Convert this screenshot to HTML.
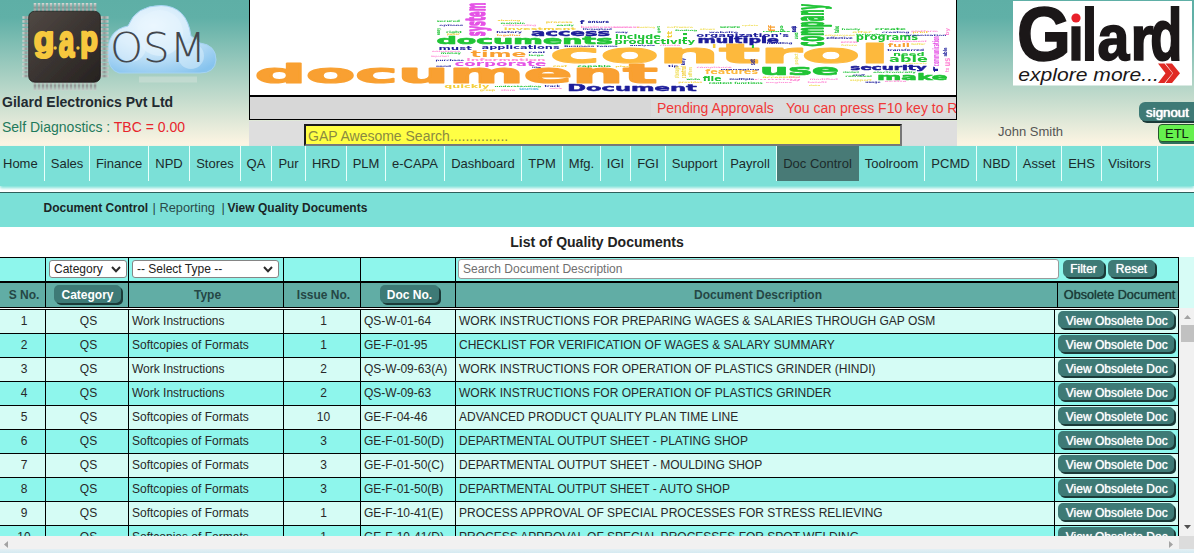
<!DOCTYPE html>
<html lang="en">
<head>
<meta charset="utf-8">
<title>GAP OSM - View Quality Documents</title>
<style>
*{box-sizing:border-box}
html,body{margin:0;padding:0}
body{width:1194px;height:553px;overflow:hidden;position:relative;background:#fff;font-family:"Liberation Sans",Arial,sans-serif;font-size:13px;color:#222}
.abs{position:absolute}
#hdr{left:0;top:0;width:1194px;height:146px;background:linear-gradient(to bottom,#5eafa6 0px,#60b0a7 18px,#fbf4e2 143px,#fcf4e3 146px)}
#banner{left:249px;top:-1px;width:708px;height:97px;border:1px solid #000;background:#fff;overflow:hidden}
#marq{left:249px;top:96px;width:708px;height:24px;border:1px solid #000;background:#d7d7d7;overflow:hidden;color:#f03838;font-size:14px;white-space:nowrap}
#marq span{position:absolute;top:2px;height:18px;line-height:18px;background:#dcdcdc;padding:0 6px}
#srchbg{left:249px;top:121px;width:708px;height:25px;background:#dedede}
#srch{left:304px;top:124px;width:598px;height:22px;background:#ffff44;border:2px solid;border-color:#1c1c1c #777 #777 #1c1c1c;color:#8a8a40;font-size:14px;line-height:20px;padding-left:2px;overflow:hidden;white-space:nowrap}
#co{left:2px;top:94px;font-weight:bold;font-size:14px;color:#222a30;white-space:nowrap;line-height:16px}
#sd{left:2px;top:119px;font-size:14px;color:#1f7a5c;white-space:nowrap;line-height:16px}
#sd b{font-weight:normal;color:#e8242c}
#user{left:998px;top:123.5px;font-size:13px;color:#555;white-space:nowrap;line-height:15px}
.btn{background:#3e7a76;color:#fff;font-weight:bold;border-radius:5px;box-shadow:2px 2px 0 #1b3a38;text-align:center;white-space:nowrap;text-shadow:0 0 1px #cfe}
#signout{left:1139px;top:102px;width:60px;height:19px;font-size:13.33px;font-weight:normal;text-shadow:0 0 1px #fff,0 0 1px #fff;line-height:21px;overflow:hidden;border-radius:6px;text-align:left;padding-left:7px}
#etl{left:1158px;top:124px;width:40px;height:18px;background:#66f04e;border:1px solid #26562e;border-radius:4px;box-shadow:1px 2px 0 #2f6f5c;font-size:13px;line-height:17px;color:#10200f;padding-left:6px}
#nav{left:0;top:146px;width:1194px;height:40px;background:#7be0d7;box-shadow:0 2px 3px #7be0d7}
#nav div{position:absolute;top:0;height:35px;border-right:1px solid #e8fffb;font-size:13px;line-height:35px;text-align:center;color:#1c2b2b;white-space:nowrap}
#nav div.on{background:#487a76;border-right-color:#487a76}
#sub{left:0;top:192px;width:1194px;height:35px;background:#7be0d7;border-top:1px solid #2f5f5b}
#sub span{position:absolute;top:7px;font-size:12.8px;line-height:15px;white-space:nowrap;color:#2a4a48}
#sub b{font-size:12px}
#sub b{color:#1a2626}
#ttl{left:397px;top:234px;width:400px;text-align:center;font-weight:bold;font-size:14px;line-height:17px;color:#222}

#side{left:1179px;top:257px;width:15px;height:51px;background:#d7fcf6}
#th{left:0;top:257px;width:1179px;height:51px;background:#000;overflow:hidden}
#th .c{position:absolute;overflow:hidden;white-space:nowrap}
#th .f{top:1px;height:23px;background:#8ef6ec}
#th .h{top:26px;height:24px;background:#61ada5;color:#254745;font-weight:bold;font-size:12px;line-height:24px;text-align:center}
.c1{left:0;width:45px}.c2{left:46px;width:82px}.c3{left:129px;width:154px}.c4{left:284px;width:76px}.c5{left:361px;width:94px}
#th .c6{left:456px;width:601px}#th .c7{left:1058px;width:120px}
#tb .c6{left:456px;width:598px}#tb .c7{left:1055px;width:123px}
.sel{position:absolute;top:2px;height:18px;background:#fff;border:1px solid #858585;border-radius:3px;font-size:12px;line-height:16px;color:#222;padding-left:4px;white-space:nowrap}
.sel svg{position:absolute;right:5px;top:5px}
#dsc{position:absolute;left:2px;top:1px;width:601px;height:20px;background:#fff;border:1px solid #9a9a9a;border-radius:3px;font-size:12px;line-height:18px;color:#6f6f6f;padding-left:4px}
.hb{position:absolute;top:2px;height:18px;line-height:20.5px;font-size:12px;font-weight:bold;text-shadow:none}
.fb{position:absolute;top:2px;height:17px;line-height:18px;overflow:hidden;font-size:12px;font-weight:normal;text-shadow:0 0 1px #fff}
#tb{left:0;top:309px;width:1179px;height:227px;background:#000;overflow:hidden}
#tb .r{position:absolute;left:0;width:1179px;height:23px}
#tb .c{position:absolute;top:0;height:23px;font-size:12px;line-height:23px;color:#282828;white-space:nowrap;overflow:hidden}
#tb .o .c{background:#d5fcf5}#tb .e .c{background:#8ef6ec}
#tb .c1,#tb .c2,#tb .c4{text-align:center;padding-left:3px}
#th .h{padding-left:3px}
#tb .c3,#tb .c5,#tb .c6{padding-left:3px}
.vb{position:absolute;left:3px;top:1px;width:115.5px;height:17px;line-height:21.5px;overflow:hidden;padding-left:2px;font-size:12px;font-weight:normal;text-shadow:0 0 1px #fff}
#vs{left:1179px;top:308px;width:15px;height:228px;background:#f1f1f1}
#vs i{position:absolute;left:2px;top:17px;width:13px;height:17px;background:#c1c1c1}
#hs{left:0;top:536px;width:1179px;height:13px;background:#f1f1f1}
#cor{left:1179px;top:536px;width:15px;height:13px;background:#dcdcdc}
#foot{left:0;top:549px;width:1194px;height:4px;background:linear-gradient(to bottom,#e4f0f4,#d5eaf1)}
</style>
</head>
<body>
<div class="abs" id="hdr"></div>

<!--GAP--><svg class="abs" style="left:0;top:0" width="249" height="95" viewBox="0 0 249 95">
<defs>
<linearGradient id="pg" x1="0" y1="0" x2="0" y2="1"><stop offset="0" stop-color="#d8dcd8"/><stop offset=".5" stop-color="#8f9694"/><stop offset="1" stop-color="#c9cfcc"/></linearGradient>
<linearGradient id="ph" x1="0" y1="0" x2="1" y2="0"><stop offset="0" stop-color="#d8dcd8"/><stop offset=".5" stop-color="#8f9694"/><stop offset="1" stop-color="#c9cfcc"/></linearGradient>
<linearGradient id="chip" x1="0" y1="0" x2="1" y2="1"><stop offset="0" stop-color="#514944"/><stop offset=".5" stop-color="#3a3431"/><stop offset="1" stop-color="#262220"/></linearGradient>
<radialGradient id="cl" cx=".42" cy=".3" r=".8"><stop offset="0" stop-color="#f1f9ff"/><stop offset=".45" stop-color="#d2eafa"/><stop offset="1" stop-color="#86c3ee"/></radialGradient>
<filter id="bl" x="-10%" y="-10%" width="120%" height="120%"><feGaussianBlur stdDeviation="0.6"/></filter>
</defs>
<g filter="url(#bl)">
<path d="M119 73 Q108 70 108 54 Q107 30 128 26 Q136 5.5 161 5.5 Q187 6 191 36 Q198 40 200 43 Q216 45 216 60 Q215 73 200 73 Z" fill="url(#cl)" stroke="#a5d3f2" stroke-width="1"/>
<circle cx="160" cy="33" r="23" fill="#e6f4fd" opacity=".55"/>
<circle cx="131" cy="47" r="15" fill="#e6f4fd" opacity=".5"/>
<circle cx="191" cy="56" r="13" fill="#dcf0fc" opacity=".5"/>
<rect x="139" y="76.5" width="58" height="6" fill="#dfe6e2" opacity=".4"/>
</g>
<text transform="translate(109.94 61.57) scale(0.4205 0.4172)" font-family="'DejaVu Sans Light','DejaVu Sans',sans-serif" font-weight="200" font-size="100" fill="#43474d">OSM</text>
<g filter="url(#bl)"><rect x="33.7" y="3" width="2.6" height="9" fill="url(#pg)"/><rect x="33.7" y="81" width="2.6" height="9.5" fill="url(#pg)"/><rect x="37.7" y="3" width="2.6" height="9" fill="url(#pg)"/><rect x="37.7" y="81" width="2.6" height="9.5" fill="url(#pg)"/><rect x="41.7" y="3" width="2.6" height="9" fill="url(#pg)"/><rect x="41.7" y="81" width="2.6" height="9.5" fill="url(#pg)"/><rect x="45.7" y="3" width="2.6" height="9" fill="url(#pg)"/><rect x="45.7" y="81" width="2.6" height="9.5" fill="url(#pg)"/><rect x="49.7" y="3" width="2.6" height="9" fill="url(#pg)"/><rect x="49.7" y="81" width="2.6" height="9.5" fill="url(#pg)"/><rect x="53.7" y="3" width="2.6" height="9" fill="url(#pg)"/><rect x="53.7" y="81" width="2.6" height="9.5" fill="url(#pg)"/><rect x="57.7" y="3" width="2.6" height="9" fill="url(#pg)"/><rect x="57.7" y="81" width="2.6" height="9.5" fill="url(#pg)"/><rect x="61.7" y="3" width="2.6" height="9" fill="url(#pg)"/><rect x="61.7" y="81" width="2.6" height="9.5" fill="url(#pg)"/><rect x="65.7" y="3" width="2.6" height="9" fill="url(#pg)"/><rect x="65.7" y="81" width="2.6" height="9.5" fill="url(#pg)"/><rect x="69.7" y="3" width="2.6" height="9" fill="url(#pg)"/><rect x="69.7" y="81" width="2.6" height="9.5" fill="url(#pg)"/><rect x="73.7" y="3" width="2.6" height="9" fill="url(#pg)"/><rect x="73.7" y="81" width="2.6" height="9.5" fill="url(#pg)"/><rect x="77.7" y="3" width="2.6" height="9" fill="url(#pg)"/><rect x="77.7" y="81" width="2.6" height="9.5" fill="url(#pg)"/><rect x="81.7" y="3" width="2.6" height="9" fill="url(#pg)"/><rect x="81.7" y="81" width="2.6" height="9.5" fill="url(#pg)"/><rect x="85.7" y="3" width="2.6" height="9" fill="url(#pg)"/><rect x="85.7" y="81" width="2.6" height="9.5" fill="url(#pg)"/><rect x="89.7" y="3" width="2.6" height="9" fill="url(#pg)"/><rect x="89.7" y="81" width="2.6" height="9.5" fill="url(#pg)"/><rect x="93.7" y="3" width="2.6" height="9" fill="url(#pg)"/><rect x="93.7" y="81" width="2.6" height="9.5" fill="url(#pg)"/><rect x="22.5" y="16.2" width="7" height="2.6" fill="url(#ph)"/><rect x="100" y="16.2" width="8.5" height="2.6" fill="url(#ph)"/><rect x="22.5" y="20.1" width="7" height="2.6" fill="url(#ph)"/><rect x="100" y="20.1" width="8.5" height="2.6" fill="url(#ph)"/><rect x="22.5" y="24.0" width="7" height="2.6" fill="url(#ph)"/><rect x="100" y="24.0" width="8.5" height="2.6" fill="url(#ph)"/><rect x="22.5" y="27.9" width="7" height="2.6" fill="url(#ph)"/><rect x="100" y="27.9" width="8.5" height="2.6" fill="url(#ph)"/><rect x="22.5" y="31.8" width="7" height="2.6" fill="url(#ph)"/><rect x="100" y="31.8" width="8.5" height="2.6" fill="url(#ph)"/><rect x="22.5" y="35.7" width="7" height="2.6" fill="url(#ph)"/><rect x="100" y="35.7" width="8.5" height="2.6" fill="url(#ph)"/><rect x="22.5" y="39.6" width="7" height="2.6" fill="url(#ph)"/><rect x="100" y="39.6" width="8.5" height="2.6" fill="url(#ph)"/><rect x="22.5" y="43.5" width="7" height="2.6" fill="url(#ph)"/><rect x="100" y="43.5" width="8.5" height="2.6" fill="url(#ph)"/><rect x="22.5" y="47.4" width="7" height="2.6" fill="url(#ph)"/><rect x="100" y="47.4" width="8.5" height="2.6" fill="url(#ph)"/><rect x="22.5" y="51.3" width="7" height="2.6" fill="url(#ph)"/><rect x="100" y="51.3" width="8.5" height="2.6" fill="url(#ph)"/><rect x="22.5" y="55.2" width="7" height="2.6" fill="url(#ph)"/><rect x="100" y="55.2" width="8.5" height="2.6" fill="url(#ph)"/><rect x="22.5" y="59.1" width="7" height="2.6" fill="url(#ph)"/><rect x="100" y="59.1" width="8.5" height="2.6" fill="url(#ph)"/><rect x="22.5" y="63.0" width="7" height="2.6" fill="url(#ph)"/><rect x="100" y="63.0" width="8.5" height="2.6" fill="url(#ph)"/><rect x="22.5" y="66.9" width="7" height="2.6" fill="url(#ph)"/><rect x="100" y="66.9" width="8.5" height="2.6" fill="url(#ph)"/><rect x="22.5" y="70.8" width="7" height="2.6" fill="url(#ph)"/><rect x="100" y="70.8" width="8.5" height="2.6" fill="url(#ph)"/><rect x="22.5" y="74.7" width="7" height="2.6" fill="url(#ph)"/><rect x="100" y="74.7" width="8.5" height="2.6" fill="url(#ph)"/>
<rect x="28.7" y="11.2" width="71.7" height="71" rx="6" fill="url(#chip)" stroke="#1d1a19" stroke-width=".8"/>
</g>
<text transform="translate(33.65 50.95) scale(0.3366 0.3507)" font-family="'Liberation Sans',Arial,sans-serif" font-weight="bold" font-size="100" fill="#f6c83e" stroke="#f6c83e" stroke-width="2.2" vector-effect="non-scaling-stroke" stroke-linejoin="round">g</text>
<text transform="translate(58.83 57.04) scale(0.2804 0.4639)" font-family="'Liberation Sans',Arial,sans-serif" font-weight="bold" font-size="100" fill="#f6c83e" stroke="#f6c83e" stroke-width="2.2" vector-effect="non-scaling-stroke" stroke-linejoin="round">a</text>
<text transform="translate(80.23 51.10) scale(0.2871 0.3518)" font-family="'Liberation Sans',Arial,sans-serif" font-weight="bold" font-size="100" fill="#f6c83e" stroke="#f6c83e" stroke-width="2.2" vector-effect="non-scaling-stroke" stroke-linejoin="round">p</text>
<circle cx="55.2" cy="48" r="1.7" fill="#f6c83e"/>
<circle cx="78" cy="48" r="1.7" fill="#f6c83e"/>
</svg><!--/GAP-->

<div class="abs" id="co">Gilard Electronics Pvt Ltd</div>
<div class="abs" id="sd">Self Diagnostics : <b>TBC = 0.00</b></div>

<div class="abs" id="banner">
<!--CLOUD--><svg class="abs" style="left:0;top:0" width="706" height="96" viewBox="0 0 706 96">
<defs><filter id="cb" x="-2%" y="-5%" width="104%" height="110%"><feGaussianBlur stdDeviation="0.45"/></filter></defs>
<g filter="url(#cb)">
<text transform="translate(4.65 82.71) scale(0.7176 0.2594)" font-family="'DejaVu Sans',sans-serif" font-weight="bold" font-size="100" fill="#f9a030" stroke="#f9a030" stroke-width="2.4" vector-effect="non-scaling-stroke" stroke-linejoin="round">document</text>
<text transform="translate(299.99 63.20) scale(0.8502 0.2684)" font-family="'DejaVu Sans',sans-serif" font-weight="bold" font-size="100" fill="#fdb93e" stroke="#fdb93e" stroke-width="2.4" vector-effect="non-scaling-stroke" stroke-linejoin="round">control</text>
<text transform="translate(186.39 44.34) scale(0.2842 0.1071)" font-family="'DejaVu Sans',sans-serif" font-weight="bold" font-size="100" fill="#20c436" stroke="#20c436" stroke-width="1.2" vector-effect="non-scaling-stroke" stroke-linejoin="round">documents</text>
<text transform="translate(509.91 74.90) scale(0.3984 0.1322)" font-family="'DejaVu Sans',sans-serif" font-weight="bold" font-size="100" fill="#20c436" stroke="#20c436" stroke-width="1.4" vector-effect="non-scaling-stroke" stroke-linejoin="round">use</text>
<text transform="translate(572.71 46.56) rotate(-90) scale(0.0837 0.3858)" font-family="'DejaVu Sans',sans-serif" font-weight="bold" font-size="100" fill="#20c436" stroke="#20c436" stroke-width="1.4" vector-effect="non-scaling-stroke" stroke-linejoin="round">company</text>
<text transform="translate(234.58 36.32) rotate(-90) scale(0.0836 0.2616)" font-family="'DejaVu Sans',sans-serif" font-weight="bold" font-size="100" fill="#e552e6" stroke="#e552e6" stroke-width="1.2" vector-effect="non-scaling-stroke" stroke-linejoin="round">system</text>
<text transform="translate(281.10 36.37) scale(0.2122 0.0835)" font-family="'DejaVu Sans',sans-serif" font-weight="bold" font-size="100" fill="#1c1c9a" stroke="#1c1c9a" stroke-width="0.8" vector-effect="non-scaling-stroke" stroke-linejoin="round">access</text>
<text transform="translate(220.52 56.86) scale(0.2206 0.0903)" font-family="'DejaVu Sans',sans-serif" font-weight="bold" font-size="100" fill="#f9a030">time</text>
<text transform="translate(204.49 66.31) scale(0.1669 0.0670)" font-family="'DejaVu Sans',sans-serif" font-weight="bold" font-size="100" fill="#e552e6">corporate</text>
<text transform="translate(216.22 61.14) scale(0.1195 0.0413)" font-family="'DejaVu Sans',sans-serif" font-weight="bold" font-size="100" fill="#ff8cd6">Information</text>
<text transform="translate(231.52 49.33) scale(0.1139 0.0517)" font-family="'DejaVu Sans',sans-serif" font-weight="bold" font-size="100" fill="#1c1c9a">applications</text>
<text transform="translate(188.53 50.21) scale(0.1182 0.0571)" font-family="'DejaVu Sans',sans-serif" font-weight="bold" font-size="100" fill="#1c1c9a">must</text>
<text transform="translate(194.33 88.03) scale(0.1115 0.0544)" font-family="'DejaVu Sans',sans-serif" font-weight="bold" font-size="100" fill="#f4cf3a">quickly</text>
<text transform="translate(317.27 91.28) scale(0.2261 0.0819)" font-family="'DejaVu Sans',sans-serif" font-weight="bold" font-size="100" fill="#1c1c9a" stroke="#1c1c9a" stroke-width="0.8" vector-effect="non-scaling-stroke" stroke-linejoin="round">Document</text>
<text transform="translate(447.46 42.97) scale(0.1749 0.0786)" font-family="'DejaVu Sans',sans-serif" font-weight="bold" font-size="100" fill="#1c1c9a" stroke="#1c1c9a" stroke-width="0.8" vector-effect="non-scaling-stroke" stroke-linejoin="round">multiple</text>
<text transform="translate(364.23 44.25) scale(0.1180 0.0626)" font-family="'DejaVu Sans',sans-serif" font-weight="bold" font-size="100" fill="#20c436">productivity</text>
<text transform="translate(365.08 39.31) scale(0.1117 0.0606)" font-family="'DejaVu Sans',sans-serif" font-weight="bold" font-size="100" fill="#20c436">include</text>
<text transform="translate(446.31 36.50) scale(0.1162 0.0513)" font-family="'DejaVu Sans',sans-serif" font-weight="bold" font-size="100" fill="#1c1c9a">organization's</text>
<text transform="translate(605.85 40.37) scale(0.1149 0.0852)" font-family="'DejaVu Sans',sans-serif" font-weight="bold" font-size="100" fill="#20c436">programs</text>
<text transform="translate(600.36 70.26) scale(0.1684 0.0718)" font-family="'DejaVu Sans',sans-serif" font-weight="bold" font-size="100" fill="#1c1c9a" stroke="#1c1c9a" stroke-width="0.8" vector-effect="non-scaling-stroke" stroke-linejoin="round">security</text>
<text transform="translate(627.08 80.07) scale(0.2326 0.0877)" font-family="'DejaVu Sans',sans-serif" font-weight="bold" font-size="100" fill="#20c436" stroke="#20c436" stroke-width="1" vector-effect="non-scaling-stroke" stroke-linejoin="round">make</text>
<text transform="translate(639.12 62.08) scale(0.1603 0.0826)" font-family="'DejaVu Sans',sans-serif" font-weight="bold" font-size="100" fill="#20c436">able</text>
<text transform="translate(643.06 55.52) scale(0.1135 0.0516)" font-family="'DejaVu Sans',sans-serif" font-weight="bold" font-size="100" fill="#20c436">need</text>
<text transform="translate(637.79 47.12) scale(0.1212 0.0542)" font-family="'DejaVu Sans',sans-serif" font-weight="bold" font-size="100" fill="#f9a030">full</text>
<text transform="translate(455.31 74.20) scale(0.1113 0.0684)" font-family="'DejaVu Sans',sans-serif" font-weight="bold" font-size="100" fill="#fdb93e">features</text>
<text transform="translate(452.69 81.21) scale(0.1068 0.0632)" font-family="'DejaVu Sans',sans-serif" font-weight="bold" font-size="100" fill="#20c436">file</text>
<text transform="translate(689.17 66.15) rotate(-90) scale(0.0347 0.0890)" font-family="'DejaVu Sans',sans-serif" font-weight="bold" font-size="100" fill="#e552e6">communication</text>
<text transform="translate(186.74 22.16) scale(0.0519 0.0284)" font-family="'DejaVu Sans',sans-serif" font-weight="bold" font-size="100" fill="#20c436">secured</text>
<text transform="translate(189.26 25.73) scale(0.0569 0.0227)" font-family="'DejaVu Sans',sans-serif" font-weight="bold" font-size="100" fill="#1c1c9a">options</text>
<text transform="translate(196.02 32.58) scale(0.0588 0.0287)" font-family="'DejaVu Sans',sans-serif" font-weight="bold" font-size="100" fill="#20c436">right</text>
<text transform="translate(196.66 35.43) scale(0.0407 0.0274)" font-family="'DejaVu Sans',sans-serif" font-weight="bold" font-size="100" fill="#f4cf3a">paper</text>
<text transform="translate(189.89 35.12) rotate(-90) scale(0.0276 0.0516)" font-family="'DejaVu Sans',sans-serif" font-weight="bold" font-size="100" fill="#20c436">easy</text>
<text transform="translate(247.43 21.48) scale(0.0542 0.0195)" font-family="'DejaVu Sans',sans-serif" font-weight="bold" font-size="100" fill="#f4cf3a">sharing</text>
<text transform="translate(250.60 23.57) scale(0.0490 0.0219)" font-family="'DejaVu Sans',sans-serif" font-weight="bold" font-size="100" fill="#20c436">maintain</text>
<text transform="translate(252.81 26.01) scale(0.0450 0.0226)" font-family="'DejaVu Sans',sans-serif" font-weight="bold" font-size="100" fill="#ff8cd6">collaborating</text>
<text transform="translate(253.76 29.95) scale(0.1135 0.0361)" font-family="'DejaVu Sans',sans-serif" font-weight="bold" font-size="100" fill="#f4cf3a">investment</text>
<text transform="translate(246.26 32.93) scale(0.0653 0.0267)" font-family="'DejaVu Sans',sans-serif" font-weight="bold" font-size="100" fill="#1c1c9a">history</text>
<text transform="translate(246.74 36.49) scale(0.0493 0.0236)" font-family="'DejaVu Sans',sans-serif" font-weight="bold" font-size="100" fill="#f9a030">together</text>
<text transform="translate(295.79 23.31) scale(0.0617 0.0287)" font-family="'DejaVu Sans',sans-serif" font-weight="bold" font-size="100" fill="#f4cf3a">process</text>
<text transform="translate(306.47 26.01) scale(0.0536 0.0226)" font-family="'DejaVu Sans',sans-serif" font-weight="bold" font-size="100" fill="#20c436">easily</text>
<text transform="translate(329.82 23.80) scale(0.1053 0.0579)" font-family="'DejaVu Sans',sans-serif" font-weight="bold" font-size="100" fill="#1c1c9a">f</text>
<text transform="translate(337.77 23.14) scale(0.0551 0.0383)" font-family="'DejaVu Sans',sans-serif" font-weight="bold" font-size="100" fill="#1c1c9a">ensure</text>
<text transform="translate(330.49 27.86) scale(0.0619 0.0284)" font-family="'DejaVu Sans',sans-serif" font-weight="bold" font-size="100" fill="#ff8cd6">business success</text>
<text transform="translate(332.74 30.47) scale(0.0464 0.0246)" font-family="'DejaVu Sans',sans-serif" font-weight="bold" font-size="100" fill="#1c1c9a">throughout</text>
<text transform="translate(365.35 33.10) scale(0.0545 0.0232)" font-family="'DejaVu Sans',sans-serif" font-weight="bold" font-size="100" fill="#1c1c9a">may</text>
<text transform="translate(313.95 47.27) scale(0.0611 0.0232)" font-family="'DejaVu Sans',sans-serif" font-weight="bold" font-size="100" fill="#1c1c9a">Business teams</text>
<text transform="translate(181.72 52.17) scale(0.0554 0.0206)" font-family="'DejaVu Sans',sans-serif" font-weight="bold" font-size="100" fill="#ff8cd6">solutions</text>
<text transform="translate(190.86 54.05) scale(0.0536 0.0258)" font-family="'DejaVu Sans',sans-serif" font-weight="bold" font-size="100" fill="#20c436">money</text>
<text transform="translate(180.73 57.23) scale(0.0326 0.0227)" font-family="'DejaVu Sans',sans-serif" font-weight="bold" font-size="100" fill="#ff8cd6">important</text>
<text transform="translate(185.54 60.73) scale(0.0553 0.0227)" font-family="'DejaVu Sans',sans-serif" font-weight="bold" font-size="100" fill="#1c1c9a">purchase</text>
<text transform="translate(185.71 66.86) scale(0.0576 0.0245)" font-family="'DejaVu Sans',sans-serif" font-weight="bold" font-size="100" fill="#1c1c9a">send</text>
<text transform="translate(278.36 52.97) scale(0.0771 0.0232)" font-family="'DejaVu Sans',sans-serif" font-weight="bold" font-size="100" fill="#1c1c9a">real</text>
<text transform="translate(278.56 56.01) scale(0.0530 0.0226)" font-family="'DejaVu Sans',sans-serif" font-weight="bold" font-size="100" fill="#20c436">large</text>
<text transform="translate(244.56 86.56) scale(0.0568 0.0205)" font-family="'DejaVu Sans',sans-serif" font-weight="bold" font-size="100" fill="#20c436">understanding</text>
<text transform="translate(294.53 86.86) scale(0.0536 0.0284)" font-family="'DejaVu Sans',sans-serif" font-weight="bold" font-size="100" fill="#1c1c9a">track</text>
<text transform="translate(250.75 91.06) scale(0.0494 0.0237)" font-family="'DejaVu Sans',sans-serif" font-weight="bold" font-size="100" fill="#ff8cd6">store</text>
<text transform="translate(269.18 89.84) scale(0.0449 0.0383)" font-family="'DejaVu Sans',sans-serif" font-weight="bold" font-size="100" fill="#58b8e8">sources</text>
<text transform="translate(229.80 90.52) scale(0.0463 0.0271)" font-family="'DejaVu Sans',sans-serif" font-weight="bold" font-size="100" fill="#f4cf3a">group</text>
<text transform="translate(299.53 89.17) scale(0.0332 0.0194)" font-family="'DejaVu Sans',sans-serif" font-weight="bold" font-size="100" fill="#ff8cd6">mobile</text>
<text transform="translate(302.74 66.86) scale(0.0611 0.0265)" font-family="'DejaVu Sans',sans-serif" font-weight="bold" font-size="100" fill="#f4cf3a">cost</text>
<text transform="translate(327.27 66.96) scale(0.0767 0.0258)" font-family="'DejaVu Sans',sans-serif" font-weight="bold" font-size="100" fill="#20c436">capable</text>
<text transform="translate(365.29 66.91) scale(0.0621 0.0186)" font-family="'DejaVu Sans',sans-serif" font-weight="bold" font-size="100" fill="#f4cf3a">plan</text>
<text transform="translate(282.02 68.27) scale(0.0459 0.0194)" font-family="'DejaVu Sans',sans-serif" font-weight="bold" font-size="100" fill="#1c1c9a">like</text>
<text transform="translate(417.92 67.20) scale(0.0676 0.0289)" font-family="'DejaVu Sans',sans-serif" font-weight="bold" font-size="100" fill="#1c1c9a">tip</text>
<text transform="translate(435.40 65.31) rotate(-90) scale(0.0374 0.0513)" font-family="'DejaVu Sans',sans-serif" font-weight="bold" font-size="100" fill="#1c1c9a">key</text>
<text transform="translate(505.40 65.18) rotate(-90) scale(0.0357 0.0697)" font-family="'DejaVu Sans',sans-serif" font-weight="bold" font-size="100" fill="#1c1c9a">set</text>
<text transform="translate(428.59 78.14) rotate(-90) scale(0.0284 0.0654)" font-family="'DejaVu Sans',sans-serif" font-weight="bold" font-size="100" fill="#f1e062">storage</text>
<text transform="translate(436.39 78.13) rotate(-90) scale(0.0310 0.0710)" font-family="'DejaVu Sans',sans-serif" font-weight="bold" font-size="100" fill="#f4cf3a">control</text>
<text transform="translate(441.52 77.13) rotate(-90) scale(0.0315 0.0529)" font-family="'DejaVu Sans',sans-serif" font-weight="bold" font-size="100" fill="#f1e062">offers</text>
<text transform="translate(360.63 27.97) scale(0.0453 0.0232)" font-family="'DejaVu Sans',sans-serif" font-weight="bold" font-size="100" fill="#ff8cd6">increase</text>
<text transform="translate(386.84 27.76) scale(0.0378 0.0205)" font-family="'DejaVu Sans',sans-serif" font-weight="bold" font-size="100" fill="#f1e062">enabling</text>
<text transform="translate(410.06 33.16) rotate(-90) scale(0.0387 0.0436)" font-family="'DejaVu Sans',sans-serif" font-weight="bold" font-size="100" fill="#20c436">get</text>
<text transform="translate(416.73 27.77) scale(0.0534 0.0232)" font-family="'DejaVu Sans',sans-serif" font-weight="bold" font-size="100" fill="#f1e062">software</text>
<text transform="translate(424.89 31.16) scale(0.0574 0.0205)" font-family="'DejaVu Sans',sans-serif" font-weight="bold" font-size="100" fill="#20c436">finding</text>
<text transform="translate(449.82 30.27) scale(0.0431 0.0232)" font-family="'DejaVu Sans',sans-serif" font-weight="bold" font-size="100" fill="#f1e062">allows</text>
<text transform="translate(469.73 28.15) scale(0.0548 0.0313)" font-family="'DejaVu Sans',sans-serif" font-weight="bold" font-size="100" fill="#20c436">secure</text>
<text transform="translate(491.68 26.41) scale(0.0416 0.0186)" font-family="'DejaVu Sans',sans-serif" font-weight="bold" font-size="100" fill="#f1e062">update</text>
<text transform="translate(525.00 31.64) rotate(-90) scale(0.0810 0.0921)" font-family="'DejaVu Sans',sans-serif" font-weight="bold" font-size="100" fill="#f9a030">ff</text>
<text transform="translate(532.89 32.21) rotate(-90) scale(0.0493 0.0516)" font-family="'DejaVu Sans',sans-serif" font-weight="bold" font-size="100" fill="#20c436">go</text>
<text transform="translate(545.86 32.04) rotate(-90) scale(0.0329 0.0549)" font-family="'DejaVu Sans',sans-serif" font-weight="bold" font-size="100" fill="#1c1c9a">top</text>
<text transform="translate(458.77 32.67) scale(0.0670 0.0219)" font-family="'DejaVu Sans',sans-serif" font-weight="bold" font-size="100" fill="#1c1c9a">website</text>
<text transform="translate(512.44 32.31) scale(0.0673 0.0187)" font-family="'DejaVu Sans',sans-serif" font-weight="bold" font-size="100" fill="#20c436">reports</text>
<text transform="translate(516.57 44.45) scale(0.0525 0.0256)" font-family="'DejaVu Sans',sans-serif" font-weight="bold" font-size="100" fill="#1c1c9a">handling</text>
<text transform="translate(379.76 46.00) scale(0.0555 0.0185)" font-family="'DejaVu Sans',sans-serif" font-weight="bold" font-size="100" fill="#1c1c9a">analysis</text>
<text transform="translate(409.78 46.37) scale(0.0518 0.0232)" font-family="'DejaVu Sans',sans-serif" font-weight="bold" font-size="100" fill="#ff8cd6">choose</text>
<text transform="translate(436.22 80.27) scale(0.0528 0.0232)" font-family="'DejaVu Sans',sans-serif" font-weight="bold" font-size="100" fill="#20c436">wide</text>
<text transform="translate(428.19 83.33) scale(0.0492 0.0227)" font-family="'DejaVu Sans',sans-serif" font-weight="bold" font-size="100" fill="#f4cf3a">provides</text>
<text transform="translate(458.77 84.26) scale(0.0545 0.0297)" font-family="'DejaVu Sans',sans-serif" font-weight="bold" font-size="100" fill="#20c436">content functions</text>
<text transform="translate(515.75 83.00) scale(0.0598 0.0185)" font-family="'DejaVu Sans',sans-serif" font-weight="bold" font-size="100" fill="#ff8cd6">engines</text>
<text transform="translate(446.57 67.57) scale(0.0552 0.0207)" font-family="'DejaVu Sans',sans-serif" font-weight="bold" font-size="100" fill="#ff8cd6">compliance</text>
<text transform="translate(470.42 69.68) scale(0.0700 0.0195)" font-family="'DejaVu Sans',sans-serif" font-weight="bold" font-size="100" fill="#1c1c9a">managing</text>
<text transform="translate(512.53 77.67) scale(0.0633 0.0232)" font-family="'DejaVu Sans',sans-serif" font-weight="bold" font-size="100" fill="#f4cf3a">accessible</text>
<text transform="translate(479.36 80.16) scale(0.0535 0.0258)" font-family="'DejaVu Sans',sans-serif" font-weight="bold" font-size="100" fill="#1c1c9a">multiple</text>
<text transform="translate(504.12 79.76) scale(0.1063 0.0205)" font-family="'DejaVu Sans',sans-serif" font-weight="bold" font-size="100" fill="#ff8cd6">running</text>
<text transform="translate(461.84 47.50) scale(0.1408 0.0526)" font-family="'DejaVu Sans',sans-serif" font-weight="bold" font-size="100" fill="#f4cf3a">l</text>
<text transform="translate(501.07 47.50) scale(0.1127 0.0395)" font-family="'DejaVu Sans',sans-serif" font-weight="bold" font-size="100" fill="#20c436">l</text>
<text transform="translate(422.00 38.09) rotate(-90) scale(0.0759 0.0712)" font-family="'DejaVu Sans',sans-serif" font-weight="bold" font-size="100" fill="#f4cf3a">tt</text>
<text transform="translate(437.00 39.95) rotate(-90) scale(0.1154 0.0526)" font-family="'DejaVu Sans',sans-serif" font-weight="bold" font-size="100" fill="#20c436">ll</text>
<text transform="translate(624.63 29.95) scale(0.0870 0.0307)" font-family="'DejaVu Sans',sans-serif" font-weight="bold" font-size="100" fill="#20c436">create</text>
<text transform="translate(631.75 32.69) scale(0.0592 0.0236)" font-family="'DejaVu Sans',sans-serif" font-weight="bold" font-size="100" fill="#1c1c9a">creating</text>
<text transform="translate(661.04 31.55) scale(0.0554 0.0217)" font-family="'DejaVu Sans',sans-serif" font-weight="bold" font-size="100" fill="#ff8cd6">platform</text>
<text transform="translate(662.53 33.41) scale(0.0569 0.0238)" font-family="'DejaVu Sans',sans-serif" font-weight="bold" font-size="100" fill="#f4cf3a">print</text>
<text transform="translate(655.25 35.61) scale(0.0579 0.0226)" font-family="'DejaVu Sans',sans-serif" font-weight="bold" font-size="100" fill="#1c1c9a">organisation</text>
<text transform="translate(591.55 29.67) scale(0.0543 0.0246)" font-family="'DejaVu Sans',sans-serif" font-weight="bold" font-size="100" fill="#20c436">handy</text>
<text transform="translate(588.50 33.04) rotate(-90) scale(0.0291 0.0671)" font-family="'DejaVu Sans',sans-serif" font-weight="bold" font-size="100" fill="#20c436">take</text>
<text transform="translate(602.19 32.96) scale(0.0728 0.0271)" font-family="'DejaVu Sans',sans-serif" font-weight="bold" font-size="100" fill="#f1e062">offer</text>
<text transform="translate(574.48 36.04) scale(0.0506 0.0215)" font-family="'DejaVu Sans',sans-serif" font-weight="bold" font-size="100" fill="#f1e062">employees</text>
<text transform="translate(605.94 35.00) scale(0.0498 0.0185)" font-family="'DejaVu Sans',sans-serif" font-weight="bold" font-size="100" fill="#20c436">technology</text>
<text transform="translate(576.27 39.06) scale(0.0539 0.0297)" font-family="'DejaVu Sans',sans-serif" font-weight="bold" font-size="100" fill="#1c1c9a">effective</text>
<text transform="translate(590.81 43.45) scale(0.0458 0.0313)" font-family="'DejaVu Sans',sans-serif" font-weight="bold" font-size="100" fill="#ff8cd6">access</text>
<text transform="translate(590.92 45.97) scale(0.0465 0.0219)" font-family="'DejaVu Sans',sans-serif" font-weight="bold" font-size="100" fill="#f1e062">future</text>
<text transform="translate(639.38 41.83) scale(0.0509 0.0218)" font-family="'DejaVu Sans',sans-serif" font-weight="bold" font-size="100" fill="#ff8cd6">management</text>
<text transform="translate(661.17 44.96) scale(0.0404 0.0258)" font-family="'DejaVu Sans',sans-serif" font-weight="bold" font-size="100" fill="#f1e062">better</text>
<text transform="translate(637.13 50.86) scale(0.0575 0.0297)" font-family="'DejaVu Sans',sans-serif" font-weight="bold" font-size="100" fill="#1c1c9a">transferred</text>
<text transform="translate(696.92 56.56) rotate(-90) scale(0.0375 0.0542)" font-family="'DejaVu Sans',sans-serif" font-weight="bold" font-size="100" fill="#1c1c9a">able</text>
<text transform="translate(687.60 72.21) rotate(-90) scale(0.1216 0.0605)" font-family="'DejaVu Sans',sans-serif" font-weight="bold" font-size="100" fill="#1c1c9a">f</text>
<text transform="translate(698.90 35.46) rotate(-90) scale(0.0552 0.0513)" font-family="'DejaVu Sans',sans-serif" font-weight="bold" font-size="100" fill="#ff8cd6">by</text>
<text transform="translate(699.87 66.52) rotate(-90) scale(0.0675 0.0870)" font-family="'DejaVu Sans',sans-serif" font-weight="bold" font-size="100" fill="#ff8cd6">us</text>
<text transform="translate(698.92 72.05) rotate(-90) scale(0.0360 0.0557)" font-family="'DejaVu Sans',sans-serif" font-weight="bold" font-size="100" fill="#ff8cd6">to</text>
<text transform="translate(545.90 32.18) rotate(-90) scale(0.0357 0.0697)" font-family="'DejaVu Sans',sans-serif" font-weight="bold" font-size="100" fill="#1c1c9a">set</text>
<text transform="translate(547.91 39.20) rotate(-90) scale(0.0256 0.0581)" font-family="'DejaVu Sans',sans-serif" font-weight="bold" font-size="100" fill="#20c436">used</text>
<text transform="translate(592.84 73.06) scale(0.0317 0.0245)" font-family="'DejaVu Sans',sans-serif" font-weight="bold" font-size="100" fill="#20c436">standard</text>
<text transform="translate(623.06 72.99) scale(0.0564 0.0236)" font-family="'DejaVu Sans',sans-serif" font-weight="bold" font-size="100" fill="#20c436">electronically</text>
<text transform="translate(602.76 75.57) scale(0.0477 0.0232)" font-family="'DejaVu Sans',sans-serif" font-weight="bold" font-size="100" fill="#1c1c9a">staff</text>
<text transform="translate(595.14 77.46) scale(0.0557 0.0245)" font-family="'DejaVu Sans',sans-serif" font-weight="bold" font-size="100" fill="#20c436">retrieval</text>
<text transform="translate(599.75 80.85) scale(0.0499 0.0264)" font-family="'DejaVu Sans',sans-serif" font-weight="bold" font-size="100" fill="#f1e062">support</text>
<text transform="translate(615.15 82.89) scale(0.0455 0.0284)" font-family="'DejaVu Sans',sans-serif" font-weight="bold" font-size="100" fill="#1c1c9a">usage</text>
<text transform="translate(634.45 82.06) scale(0.0429 0.0245)" font-family="'DejaVu Sans',sans-serif" font-weight="bold" font-size="100" fill="#ff8cd6">workflow</text>
<text transform="translate(559.52 80.27) scale(0.0582 0.0232)" font-family="'DejaVu Sans',sans-serif" font-weight="bold" font-size="100" fill="#ff8cd6">modified</text>
<text transform="translate(557.60 83.37) scale(0.0487 0.0232)" font-family="'DejaVu Sans',sans-serif" font-weight="bold" font-size="100" fill="#ff8cd6">benefit</text>
<text transform="translate(558.81 85.97) scale(0.0454 0.0194)" font-family="'DejaVu Sans',sans-serif" font-weight="bold" font-size="100" fill="#f1e062">data</text>
<text transform="translate(539.90 78.27) scale(0.0484 0.0232)" font-family="'DejaVu Sans',sans-serif" font-weight="bold" font-size="100" fill="#ff8cd6">find</text>
<text transform="translate(539.68 80.99) scale(0.0388 0.0196)" font-family="'DejaVu Sans',sans-serif" font-weight="bold" font-size="100" fill="#ff8cd6">help</text>
<text transform="translate(548.40 64.42) rotate(-90) scale(0.0268 0.0513)" font-family="'DejaVu Sans',sans-serif" font-weight="bold" font-size="100" fill="#f1e062">project</text>
<text transform="translate(655.27 63.55) scale(0.0460 0.0164)" font-family="'DejaVu Sans',sans-serif" font-weight="bold" font-size="100" fill="#f1e062">securely</text>
</g>
</svg><!--/CLOUD-->
</div>
<div class="abs" id="marq"><span style="left:401px">Pending Approvals</span><span style="left:530px;padding-right:0">You can press F10 key to Refresh</span></div>
<div class="abs" id="srchbg"></div>
<div class="abs" id="srch">GAP Awesome Search...............</div>

<!--GIL--><svg class="abs" style="left:1013px;top:1px" width="181" height="86" viewBox="0 0 181 86">
<rect x="0" y="0" width="179" height="84.5" fill="#fff"/>
<text transform="translate(4.03 58.75) scale(0.6923 0.7519)" font-family="'Liberation Sans',Arial,sans-serif" font-weight="bold" font-size="100" fill="#1b1718" stroke="#1b1718" stroke-width="1.6" vector-effect="non-scaling-stroke">G</text>
<text transform="translate(55.24 58.80) scale(0.5571 0.6207)" font-family="'Liberation Sans',Arial,sans-serif" font-weight="bold" font-size="100" fill="#1b1718" stroke="#1b1718" stroke-width="1.6" vector-effect="non-scaling-stroke">i</text>
<rect x="56.0" y="10.0" width="14" height="14" fill="#fff"/>
<circle cx="63.0" cy="17.0" r="4.6" fill="#e8202a"/>
<text transform="translate(68.84 58.80) scale(0.5571 0.7145)" font-family="'Liberation Sans',Arial,sans-serif" font-weight="bold" font-size="100" fill="#1b1718" stroke="#1b1718" stroke-width="1.6" vector-effect="non-scaling-stroke">l</text>
<text transform="translate(84.53 58.86) scale(0.5720 0.6411)" font-family="'Liberation Sans',Arial,sans-serif" font-weight="bold" font-size="100" fill="#1b1718" stroke="#1b1718" stroke-width="1.6" vector-effect="non-scaling-stroke">a</text>
<text transform="translate(117.44 58.80) scale(0.5935 0.6363)" font-family="'Liberation Sans',Arial,sans-serif" font-weight="bold" font-size="100" fill="#1b1718" stroke="#1b1718" stroke-width="1.6" vector-effect="non-scaling-stroke">r</text>
<text transform="translate(137.20 58.79) scale(0.5248 0.7143)" font-family="'Liberation Sans',Arial,sans-serif" font-weight="bold" font-size="100" fill="#1b1718" stroke="#1b1718" stroke-width="1.6" vector-effect="non-scaling-stroke">d</text>
<text transform="translate(5.31 80.28) scale(0.2110 0.1887)" font-family="'Liberation Sans',Arial,sans-serif" font-style="italic" font-size="100" fill="#1b1718">explore more...</text>
<path d="M145 62.5h6.5l8 9.7-8 9.8H145l7.5-9.8z M152.5 62.5h6.5l8 9.7-8 9.8h-6.5l7.5-9.8z" fill="#e02a24"/>
</svg><!--/GIL-->

<div class="abs btn" id="signout">signout</div>
<div class="abs" id="etl">ETL</div>
<div class="abs" id="user">John Smith</div>

<div class="abs" id="nav">
<div style="left:0;width:45px;text-align:left;padding-left:3px">Home</div>
<div style="left:45px;width:45px">Sales</div>
<div style="left:90px;width:59px">Finance</div>
<div style="left:149px;width:41px">NPD</div>
<div style="left:190px;width:51px">Stores</div>
<div style="left:241px;width:31px">QA</div>
<div style="left:272px;width:34px">Pur</div>
<div style="left:306px;width:41px">HRD</div>
<div style="left:347px;width:39px">PLM</div>
<div style="left:386px;width:59px">e-CAPA</div>
<div style="left:445px;width:77px">Dashboard</div>
<div style="left:522px;width:41px">TPM</div>
<div style="left:563px;width:38px">Mfg.</div>
<div style="left:601px;width:30px">IGI</div>
<div style="left:631px;width:35px">FGI</div>
<div style="left:666px;width:58px">Support</div>
<div style="left:724px;width:53px">Payroll</div>
<div class="on" style="left:777px;width:82px">Doc Control</div>
<div style="left:859px;width:66px">Toolroom</div>
<div style="left:925px;width:52px">PCMD</div>
<div style="left:977px;width:40px">NBD</div>
<div style="left:1017px;width:45px">Asset</div>
<div style="left:1062px;width:40px">EHS</div>
<div style="left:1102px;width:56px">Visitors</div>
</div>

<div class="abs" id="sub">
<span style="left:43.5px"><b>Document Control</b></span>
<span style="left:152.5px">|</span><span style="left:159.5px">Reporting</span>
<span style="left:221.5px">|</span><span style="left:227.5px"><b>View Quality Documents</b></span>
</div>

<div class="abs" id="ttl">List of Quality Documents</div>

<div class="abs" id="side"></div>
<div class="abs" id="th">
<div class="c f c1"></div>
<div class="c f c2"><div class="sel" style="left:3px;width:78px">Category<svg width="10" height="7" viewBox="0 0 10 7"><path d="M1 1l4 4.2L9 1" fill="none" stroke="#2b2b2b" stroke-width="2"/></svg></div></div>
<div class="c f c3"><div class="sel" style="left:3px;width:147px">-- Select Type --<svg width="10" height="7" viewBox="0 0 10 7"><path d="M1 1l4 4.2L9 1" fill="none" stroke="#2b2b2b" stroke-width="2"/></svg></div></div>
<div class="c f c4"></div>
<div class="c f c5"></div>
<div class="c f" style="left:456px;width:722px"><div id="dsc">Search Document Description</div><span class="btn fb" style="left:607px;width:41px">Filter</span><span class="btn fb" style="left:652px;width:47px">Reset</span></div>
<div class="c h c1">S No.</div>
<div class="c h c2"><span class="btn hb" style="left:8px;width:67px">Category</span></div>
<div class="c h c3">Type</div>
<div class="c h c4">Issue No.</div>
<div class="c h c5"><span class="btn hb" style="left:19px;width:59px">Doc No.</span></div>
<div class="c h c6">Document Description</div>
<div class="c h c7" style="font-weight:normal;font-size:12.6px;color:#1d3c3a;text-shadow:0 0 .7px #1d3c3a">Obsolete Document</div>
</div>
<div class="abs" id="tb">
<div class="r o" style="top:1px"><div class="c c1">1</div><div class="c c2">QS</div><div class="c c3">Work Instructions</div><div class="c c4">1</div><div class="c c5">QS-W-01-64</div><div class="c c6">WORK INSTRUCTIONS FOR PREPARING WAGES &amp; SALARIES THROUGH GAP OSM</div><div class="c c7"><span class="btn vb">View Obsolete Doc</span></div></div>
<div class="r e" style="top:25px"><div class="c c1">2</div><div class="c c2">QS</div><div class="c c3">Softcopies of Formats</div><div class="c c4">1</div><div class="c c5">GE-F-01-95</div><div class="c c6">CHECKLIST FOR VERIFICATION OF WAGES &amp; SALARY SUMMARY</div><div class="c c7"><span class="btn vb">View Obsolete Doc</span></div></div>
<div class="r o" style="top:49px"><div class="c c1">3</div><div class="c c2">QS</div><div class="c c3">Work Instructions</div><div class="c c4">2</div><div class="c c5">QS-W-09-63(A)</div><div class="c c6">WORK INSTRUCTIONS FOR OPERATION OF PLASTICS GRINDER (HINDI)</div><div class="c c7"><span class="btn vb">View Obsolete Doc</span></div></div>
<div class="r e" style="top:73px"><div class="c c1">4</div><div class="c c2">QS</div><div class="c c3">Work Instructions</div><div class="c c4">2</div><div class="c c5">QS-W-09-63</div><div class="c c6">WORK INSTRUCTIONS FOR OPERATION OF PLASTICS GRINDER</div><div class="c c7"><span class="btn vb">View Obsolete Doc</span></div></div>
<div class="r o" style="top:97px"><div class="c c1">5</div><div class="c c2">QS</div><div class="c c3">Softcopies of Formats</div><div class="c c4">10</div><div class="c c5">GE-F-04-46</div><div class="c c6">ADVANCED PRODUCT QUALITY PLAN TIME LINE</div><div class="c c7"><span class="btn vb">View Obsolete Doc</span></div></div>
<div class="r e" style="top:121px"><div class="c c1">6</div><div class="c c2">QS</div><div class="c c3">Softcopies of Formats</div><div class="c c4">3</div><div class="c c5">GE-F-01-50(D)</div><div class="c c6">DEPARTMENTAL OUTPUT SHEET - PLATING SHOP</div><div class="c c7"><span class="btn vb">View Obsolete Doc</span></div></div>
<div class="r o" style="top:145px"><div class="c c1">7</div><div class="c c2">QS</div><div class="c c3">Softcopies of Formats</div><div class="c c4">3</div><div class="c c5">GE-F-01-50(C)</div><div class="c c6">DEPARTMENTAL OUTPUT SHEET - MOULDING SHOP</div><div class="c c7"><span class="btn vb">View Obsolete Doc</span></div></div>
<div class="r e" style="top:169px"><div class="c c1">8</div><div class="c c2">QS</div><div class="c c3">Softcopies of Formats</div><div class="c c4">3</div><div class="c c5">GE-F-01-50(B)</div><div class="c c6">DEPARTMENTAL OUTPUT SHEET - AUTO SHOP</div><div class="c c7"><span class="btn vb">View Obsolete Doc</span></div></div>
<div class="r o" style="top:193px"><div class="c c1">9</div><div class="c c2">QS</div><div class="c c3">Softcopies of Formats</div><div class="c c4">1</div><div class="c c5">GE-F-10-41(E)</div><div class="c c6">PROCESS APPROVAL OF SPECIAL PROCESSES FOR STRESS RELIEVING</div><div class="c c7"><span class="btn vb">View Obsolete Doc</span></div></div>
<div class="r e" style="top:217px"><div class="c c1">10</div><div class="c c2">QS</div><div class="c c3">Softcopies of Formats</div><div class="c c4">1</div><div class="c c5">GE-F-10-41(D)</div><div class="c c6">PROCESS APPROVAL OF SPECIAL PROCESSES FOR SPOT WELDING</div><div class="c c7"><span class="btn vb">View Obsolete Doc</span></div></div>
</div>
<div class="abs" id="vs"><i></i>
<svg class="abs" style="left:5px;top:7px" width="7" height="4" viewBox="0 0 7 4"><path d="M0 4L3.5 0L7 4z" fill="#a3a3a3"/></svg>
<svg class="abs" style="left:5px;top:217px" width="7" height="4" viewBox="0 0 7 4"><path d="M0 0L3.5 4L7 0z" fill="#505050"/></svg>
</div>
<div class="abs" id="hs">
<svg class="abs" style="left:4px;top:5px" width="4" height="7" viewBox="0 0 4 7"><path d="M4 0L0 3.5L4 7z" fill="#a3a3a3"/></svg>
<svg class="abs" style="left:1169px;top:5px" width="4" height="7" viewBox="0 0 4 7"><path d="M0 0L4 3.5L0 7z" fill="#a3a3a3"/></svg>
</div>
<div class="abs" id="cor"></div>
<div class="abs" id="foot"></div>


</body>
</html>
